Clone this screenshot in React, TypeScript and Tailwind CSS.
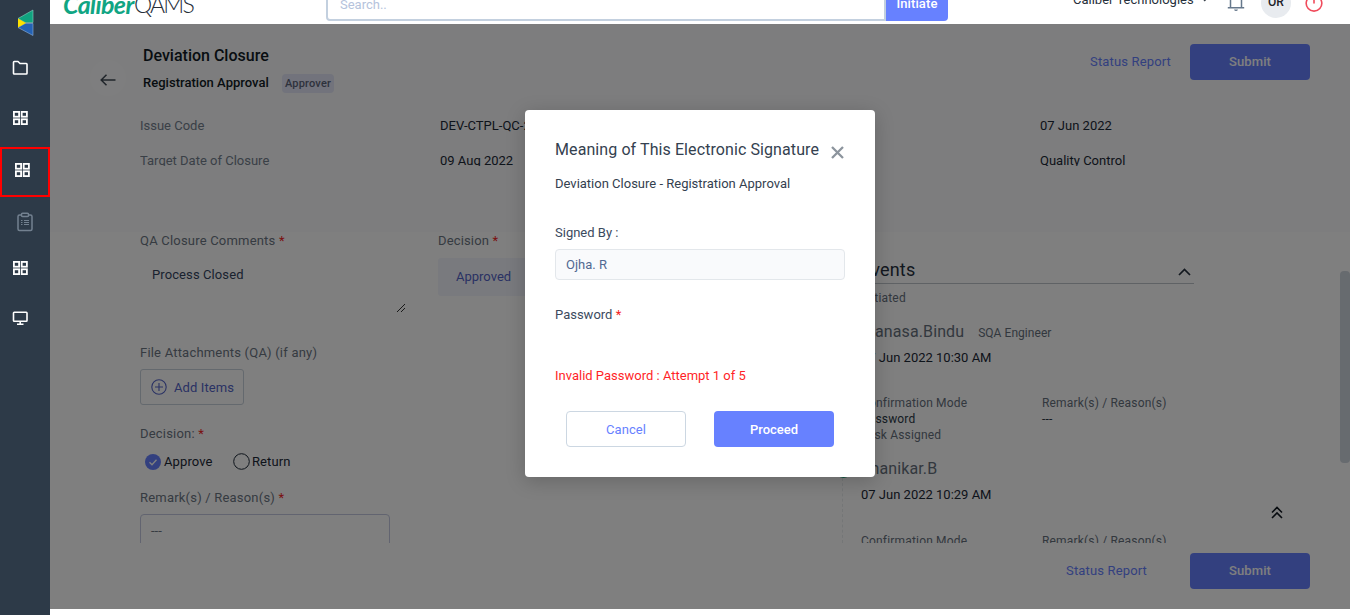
import React from "react";

function GridIcon({ className = "" }: { className?: string }) {
  return (
    <svg width="15" height="14" viewBox="0 0 15 14" fill="none" stroke="#fff" strokeWidth="1.8" className={className}>
      <rect x="0.9" y="0.9" width="5.200" height="4.8" />
      <rect x="8.7" y="0.9" width="5.200" height="4.8" />
      <rect x="0.9" y="8.3" width="5.200" height="4.8" />
      <rect x="8.7" y="8.3" width="5.200" height="4.8" />
    </svg>
  );
}

function Sidebar() {
  return (
    <aside className="flex h-full w-[50px] shrink-0 flex-col bg-[#2d3a48]">
      <div className="flex h-[48px] pl-[17px] pt-[9px]">
        <svg width="17" height="28" viewBox="0 0 17 28">
          <path d="M16 1v12.500H8L1 9.500Z" fill="#10a37f" stroke="#8ccfc0" strokeWidth="0.6" />
          <path d="M16 26.500V14.500H8L1 18.500Z" fill="#2462b4" stroke="#8fb2dd" strokeWidth="0.6" />
          <path d="M1 9.500L9 14L1 18.500Z" fill="#fde100" />
        </svg>
      </div>
      <div className="flex h-[40px] items-center pl-[12px]">
        <svg width="17" height="16" viewBox="0 0 17 16" fill="none" stroke="#fff" strokeWidth="1.6" strokeLinejoin="round">
          <path d="M1.500 2.200Q1.500 1.500 2.200 1.500H6L8 3.500H14.300Q15 3.500 15 4.200V13.300Q15 14 14.300 14H2.200Q1.500 14 1.500 13.300Z" />
        </svg>
      </div>
      <div className="flex h-[59px] items-center pl-[13px]">
        <GridIcon />
      </div>
      <div className="flex h-[50px] items-center border-2 border-[#ff0000] pb-[4px] pl-[13px]">
        <GridIcon />
      </div>
      <div className="flex h-[49px] items-center pl-[17px]">
        <svg width="16" height="20" viewBox="0 0 16 20" fill="none" stroke="#738190" strokeWidth="1.500">
          <path d="M4 3H2.500Q1 3 1 4.500V17Q1 18.500 2.500 18.500H13.500Q15 18.500 15 17V4.500Q15 3 13.500 3H12" />
          <rect x="4.500" y="1.200" width="7" height="3.400" rx="1" />
          <path d="M4 8.500H5.500M7 8.500H12M4 10.500H5.500M7 10.500H12M4 12.500H5.500M7 12.500H12" strokeWidth="1.100" />
        </svg>
      </div>
      <div className="flex h-[44px] items-center pl-[13px]">
        <GridIcon />
      </div>
      <div className="flex h-[56px] items-center pl-[12px]">
        <svg width="17" height="15" viewBox="0 0 17 15" fill="none" stroke="#fff" strokeWidth="1.600">
          <rect x="1.500" y="1.300" width="13.500" height="9" rx="0.800" />
          <path d="M8.200 10.500V13M5 13.200H11.500" />
        </svg>
      </div>
    </aside>
  );
}

function TopBar() {
  return (
    <header className="flex h-[24px] shrink-0 overflow-hidden bg-white">
      <div className="-mt-[10px] ml-[13px] flex w-[263px] leading-[28px]">
        <span className="w-[71px] font-['Lato'] text-[25px] font-bold italic tracking-[-0.6px] text-[#10a583]">Caliber</span>
        <span className="font-['Lato'] text-[23px] font-light tracking-[-1.8px] text-[#28303a]">QAMS</span>
      </div>
      <div className="-mt-4 h-[37px] w-[560px] rounded-l-[4px] border-2 border-[#c3d0df] pl-3 text-[13px] leading-[38px] text-[#b5c3dc]">
        Search..
      </div>
      <div className="-mt-[16px] h-[37px] w-[62px] rounded-r-[4px] bg-[#6781ff] text-center text-[13px] font-medium leading-[39px] tracking-[0.1px] text-white">
        Initiate
      </div>
      <div className="-mt-[9px] ml-[125px] w-[128px] text-[13px] leading-[18px] text-[#27303b]">Caliber Technologies</div>
      <svg width="8" height="4" viewBox="0 0 8 4" className="mt-[-1px]">
        <path d="M1.500 0H6L3.750 2.500Z" fill="#333b45" />
      </svg>
      <svg width="18" height="22" viewBox="0 0 18 22" fill="none" stroke="#66788c" strokeWidth="1.500" className="-mt-[10px] ml-[18px] shrink-0">
        <path d="M3.500 17.500V9Q3.500 3 9 3T14.500 9V17.500M0.800 17.700H17.200" />
        <path d="M7 19.500H11Q10.500 21 9 21T7 19.500Z" fill="#66788c" stroke="none" />
      </svg>
      <div className="-mt-3 ml-[16px] h-[30px] w-[30px] shrink-0 rounded-full bg-[#e8ebef] text-center text-[12px] font-medium leading-[29px] text-[#1c2127]">OR</div>
      <svg width="20" height="20" viewBox="0 0 20 20" fill="none" stroke="#f04b5c" strokeWidth="1.600" strokeLinecap="round" className="-mt-[7px] ml-[13px] shrink-0">
        <path d="M5.500 4A7.800 7.800 0 1 0 14.500 4M10 2V10" />
      </svg>
    </header>
  );
}

const submitButton =
  "h-9 w-[120px] rounded-[4px] bg-[#6781ff] text-center text-[13px] font-medium leading-[35px] tracking-[0.1px] text-white";

function PageHeader() {
  return (
    <section className="h-[208px] shrink-0 bg-[#fafbfc]">
      <div className="flex h-[92px]">
        <div className="ml-10 mt-9 flex h-9 w-9 items-center justify-center rounded-full bg-white/60">
          <svg width="16" height="12" viewBox="0 0 16 12" fill="none" stroke="#404a56" strokeWidth="1.500" className="mt-[3px]">
            <path d="M6.500 0.700L1.200 6L6.500 11.300M1.200 6H15.500" />
          </svg>
        </div>
        <div className="ml-[17px] mt-[21px]">
          <h1 className="text-[16px] font-medium leading-[22px] text-[#111a24]">Deviation Closure</h1>
          <div className="mt-[6px] flex items-center">
            <h2 className="w-[139px] text-[13px] font-medium leading-[20px] tracking-[0.03px] text-[#111a24]">Registration Approval</h2>
            <span className="h-[19px] w-[52px] rounded-[4px] bg-[#e4e7f8] text-center text-[11px] font-medium leading-[19px] tracking-[0.2px] text-[#5d6479]">Approver</span>
          </div>
        </div>
        <div className="ml-auto mr-10 mt-5 flex gap-[19px]">
          <span className="text-[13px] leading-[35px] tracking-[0.15px] text-[#6781ff]">Status Report</span>
          <div className={submitButton}>Submit</div>
        </div>
      </div>
      <div className="ml-[90px] grid grid-cols-[300px_300px_300px_300px] text-[13px] leading-[20px] text-[#1c2836]">
        <span className="text-[#75808e]">Issue Code</span>
        <span>DEV-CTPL-QC-22-0012</span>
        <span />
        <span>07 Jun 2022</span>
      </div>
      <div className="ml-[90px] mt-[15px] grid h-[15px] grid-cols-[300px_300px_300px_300px] overflow-hidden text-[13px] leading-[20px] text-[#1c2836]">
        <span className="text-[#75808e]">Target Date of Closure</span>
        <span>09 Aug 2022</span>
        <span />
        <span>Quality Control</span>
      </div>
    </section>
  );
}

function Star() {
  return <span className="text-[#f52323]">*</span>;
}

function FormColumn() {
  return (
    <div className="w-[298px] shrink-0 text-[13px] leading-5 tracking-[0.2px] text-[#6c7683]">
      <div className="mt-[-1px]">QA Closure Comments <Star /></div>
      <div className="mt-[14px] flex h-[48px] w-[267px] justify-between pl-3">
        <span className="tracking-[0.1px] text-[#35455f]">Process Closed</span>
        <svg width="10" height="10" viewBox="0 0 10 10" stroke="#333" strokeWidth="1" className="mr-px self-end">
          <path d="M1 9L9 1M5 9L9 5" />
        </svg>
      </div>
      <div className="mt-[30px]">File Attachments (QA) (if any)</div>
      <div className="mt-[6px] flex h-9 w-[104px] items-center gap-2 rounded-[3px] border border-[#c9d2dc] pl-[10px] text-[#5464c8]">
        <svg width="16" height="16" viewBox="0 0 16 16" fill="none" stroke="#5464c8" strokeWidth="1.100" className="-mt-px">
          <circle cx="8" cy="8" r="7.200" />
          <path d="M8 4V12M4 8H12" />
        </svg>
        <span className="-ml-px pt-px tracking-[0.1px]">Add Items</span>
      </div>
      <div className="mt-[19px]">Decision: <Star /></div>
      <div className="mt-2 flex items-center pl-[5px] tracking-[0.1px] text-[#1c2836]">
        <svg width="16" height="16" viewBox="0 0 16 16">
          <circle cx="8" cy="8" r="8" fill="#6781ff" />
          <path d="M4.500 8.200L7 10.700L11.500 5.800" fill="none" stroke="#fff" strokeWidth="1.300" />
        </svg>
        <span className="ml-[3px] w-[69px]">Approve</span>
        <svg width="17" height="17" viewBox="0 0 17 17" fill="none" stroke="#1c2836" className="-mt-px">
          <circle cx="8.500" cy="8.500" r="7.800" />
        </svg>
        <span className="ml-[2px]">Return</span>
      </div>
      <div className="mt-4">Remark(s) / Reason(s) <Star /></div>
      <div className="mt-[6px] h-[80px] w-[250px] rounded-[4px] border border-[#c4c9e0] pl-[10px] pt-[6px] tracking-normal text-[#6c7683]">---</div>
    </div>
  );
}

function Events() {
  return (
    <div className="flex w-[352px] shrink-0 text-[12px] leading-4 tracking-[0.18px] text-[#66707d]">
      <div className="mt-[228px] flex w-[19px] flex-col items-start">
        <div className="-ml-[7px] h-[18px] w-[17px] shrink-0 rounded-full bg-[#1fa37a]" />
        <div className="h-[100px] border-l border-dashed border-[#e9ecef]" />
      </div>
      <div className="grow">
        <div className="flex h-[52px] items-center justify-between border-b border-[#bfc4ca] pr-[3px] pt-[25px] text-[18px] text-[#26313e]">
          <span>Events</span>
          <svg width="13" height="8" viewBox="0 0 13 8" fill="none" stroke="#26313e" strokeWidth="1.700" className="mt-[3px]">
            <path d="M1 7L6.500 1.500L12 7" />
          </svg>
        </div>
        <div className="mt-[6px]">Initiated</div>
        <div className="mt-4 flex items-center gap-[14px]">
          <span className="text-[16px] leading-5 tracking-[0.1px]">Manasa.Bindu</span>
          <span className="mt-[2px] tracking-[0.05px]">SQA Engineer</span>
        </div>
        <div className="mt-[6px] text-[13px] leading-5 tracking-normal text-[#1c2836]">07 Jun 2022 10:30 AM</div>
        <div className="mt-[27px] grid grid-cols-[181px_auto]">
          <span>Confirmation Mode</span><span>Remark(s) / Reason(s)</span>
          <span className="text-[#2d3947]">Password</span><span className="text-[#2d3947]">---</span>
        </div>
        <div>Task Assigned</div>
        <div className="mt-4 text-[16px] leading-5 tracking-[0.1px]">Shanikar.B</div>
        <div className="mt-[6px] text-[13px] leading-5 tracking-normal text-[#1c2836]">07 Jun 2022 10:29 AM</div>
        <div className="mt-[28px] grid grid-cols-[181px_auto]">
          <span>Confirmation Mode</span><span>Remark(s) / Reason(s)</span>
        </div>
      </div>
    </div>
  );
}

function SignatureModal() {
  return (
    <div className="absolute left-[475px] top-[86px] h-[367px] w-[350px] rounded-[4px] bg-white px-[30px] pt-[29px] text-[13px] leading-5 text-[#3b4a5e] shadow-[0_4px_20px_rgba(0,0,0,0.2)]">
      <div className="flex items-center justify-between">
        <h3 className="whitespace-nowrap text-[16px] leading-[22px] tracking-[0.09px] text-[#34414f]">Meaning of This Electronic Signature</h3>
        <svg width="13" height="13" viewBox="0 0 13 13" stroke="#8c949d" strokeWidth="2.300" className="mr-[1px] mt-[5px]">
          <path d="M1 1L12 12M12 1L1 12" />
        </svg>
      </div>
      <div className="mt-[13px] text-[#34414f]">Deviation Closure - Registration Approval</div>
      <div className="mt-[29px]">Signed By :</div>
      <div className="mt-[6px] h-[31px] rounded-[4px] border border-[#e3e7eb] bg-[#f9fafc] pl-[10px] leading-[29px] text-[#526992]">Ojha. R</div>
      <div className="mt-[25px]">Password <Star /></div>
      <div className="mt-[41px] text-[#ff1f28]">Invalid Password : Attempt 1 of 5</div>
      <div className="ml-[11px] mt-[25px] flex gap-7 text-center leading-[35px]">
        <div className="h-9 w-[120px] rounded-[4px] border border-[#ccd7e2] tracking-[0.1px] text-[#6781ff]">Cancel</div>
        <div className="h-9 w-[120px] rounded-[4px] bg-[#6781ff] font-medium leading-[37px] text-white">Proceed</div>
      </div>
    </div>
  );
}

export default function App() {
  return (
    <div className="flex h-[615px] w-[1350px] overflow-hidden bg-white font-['Roboto',sans-serif]">
      <Sidebar />
      <div className="flex w-[1300px] flex-col">
        <TopBar />
        <main className="relative flex h-[585px] flex-col bg-white">
          <PageHeader />
          <section className="flex h-[311px] shrink-0 overflow-hidden pl-[90px]">
            <FormColumn />
            <div className="mt-[-1px] w-[404px] shrink-0 text-[13px] leading-5 tracking-[0.15px] text-[#6c7683]">
              <div>Decision <Star /></div>
              <div className="mt-[7px] h-[38px] w-[250px] rounded-[3px] bg-[#f3f5fc] pl-[18px] leading-[37px] tracking-normal text-[#5464c8]">Approved</div>
            </div>
            <Events />
            <svg width="12" height="13" viewBox="0 0 12 13" fill="none" stroke="#111820" strokeWidth="1.600" className="ml-[77px] mt-[274px] shrink-0">
              <path d="M1 6.500L6 1.500L11 6.500M1 12L6 7L11 12" />
            </svg>
            <div className="ml-auto mt-[39px] h-[192px] w-[10px] shrink-0 rounded-[4px] bg-[#cfd6df]" />
          </section>
          <footer className="flex h-[66px] justify-end gap-[43px] pr-10 pt-[10px]">
            <span className="text-[13px] leading-[35px] tracking-[0.15px] text-[#6781ff]">Status Report</span>
            <div className={submitButton}>Submit</div>
          </footer>
          <div className="absolute inset-0 bg-black/50" />
          <SignatureModal />
        </main>
      </div>
    </div>
  );
}
